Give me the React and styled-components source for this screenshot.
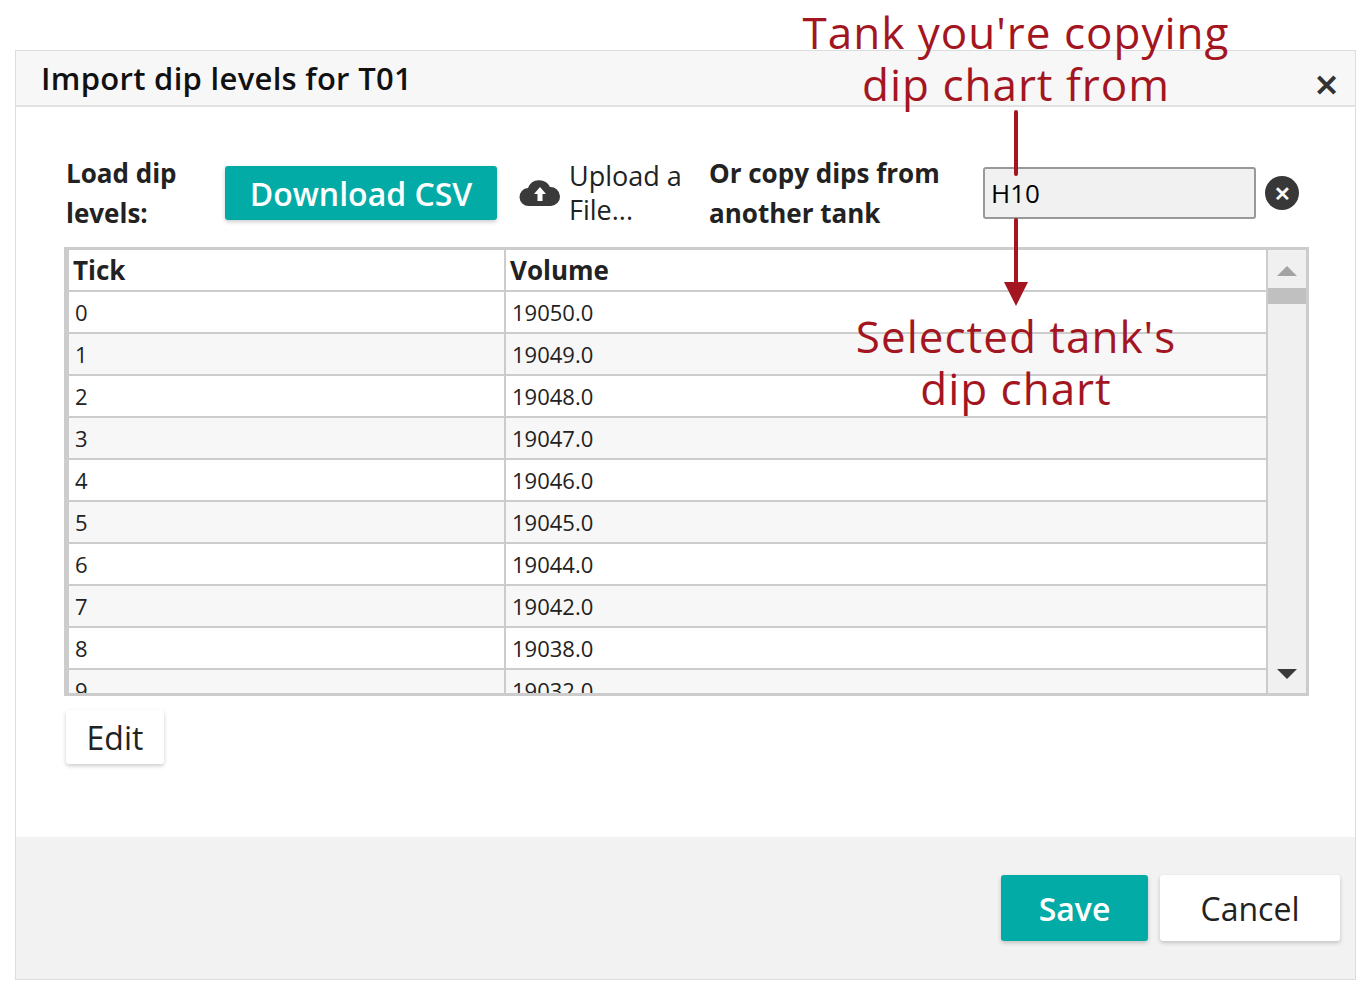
import styled, { createGlobalStyle } from "styled-components";

const Global = createGlobalStyle`
  body { margin: 0; background: #fff; font-family: "Open Sans", "Lato", sans-serif; }
`;

const rows = [
  ["0", "19050.0"], ["1", "19049.0"], ["2", "19048.0"], ["3", "19047.0"], ["4", "19046.0"],
  ["5", "19045.0"], ["6", "19044.0"], ["7", "19042.0"], ["8", "19038.0"], ["9", "19032.0"],
];

const App = () => (
  <Page>
    <Global />
    <Dialog>
      <Header>
        <Title>Import dip levels for T01</Title>
        <Close>✕</Close>
      </Header>
      <Body>
        <Toolbar>
          <Label width={159}>Load dip<br />levels:</Label>
          <Primary>Download CSV</Primary>
          <Upload>
            <svg width="42" height="30" viewBox="0 0 42 30">
              <path d="M10 28 A9 9 0 0 1 9 10 A12 12 0 0 1 31 9 A9.5 9.5 0 0 1 32 28 Z" fill="#3a3a3a" />
              <path d="M21 9 L27 16 H23.5 V23 H18.5 V16 H15 Z" fill="#fff" />
            </svg>
            <span>Upload a<br />File...</span>
          </Upload>
          <Label width={274}>Or copy dips from<br />another tank</Label>
          <Input>H10</Input>
          <Clear>✕</Clear>
        </Toolbar>
        <TableWrap>
          <Table>
            <HeadRow><Cell bold>Tick</Cell><Cell bold>Volume</Cell></HeadRow>
            {rows.map(([t, v], i) => (
              <Row key={t} alt={i % 2 === 1}><Cell>{t}</Cell><Cell>{v}</Cell></Row>
            ))}
          </Table>
          <Scroll>
            <Arrow up />
            <Thumb />
            <Spacer />
            <Arrow />
          </Scroll>
        </TableWrap>
        <Ghost>Edit</Ghost>
      </Body>
      <Footer>
        <SaveBtn>Save</SaveBtn>
        <CancelBtn>Cancel</CancelBtn>
      </Footer>
    </Dialog>
    <Note top={6}>Tank you're copying<br />dip chart from</Note>
    <Line top={110} height={66} />
    <Line top={218} height={72} />
    <Head />
    <Note top={310}>Selected tank's<br />dip chart</Note>
  </Page>
);

export default App;

const Page = styled.div`
  position: relative;
  width: 1372px;
  height: 999px;
  padding: 50px 0 0 15px;
  box-sizing: border-box;
`;

const Dialog = styled.div`
  width: 1341px;
  height: 930px;
  border: 1px solid #ddd;
  display: flex;
  flex-direction: column;
  box-sizing: border-box;
`;

const Header = styled.div`
  height: 56px;
  background: #f7f7f7;
  border-bottom: 2px solid #e2e2e2;
  display: flex;
  align-items: center;
  justify-content: space-between;
  padding: 0 16px 0 25px;
  box-sizing: border-box;
`;

const Title = styled.div`
  font-size: 31px;
  font-weight: 600;
  color: #111;
  letter-spacing: 0.3px;
`;

const Close = styled.div`
  font-size: 30px;
  color: #333;
  font-weight: bold;
  margin-top: 12px;
`;

const Body = styled.div`
  flex: 1;
  padding: 50px 48px 0 48px;
`;

const Toolbar = styled.div`
  display: flex;
  align-items: center;
  height: 72px;
  margin-left: 2px;
  margin-bottom: 18px;
`;

const Label = styled.div`
  width: ${(p) => p.width}px;
  flex-shrink: 0;
  font-size: 26px;
  font-weight: 700;
  line-height: 40px;
  color: #222;
`;

const Btn = styled.div`
  border-radius: 3px;
  box-shadow: 0 2px 4px rgba(0, 0, 0, 0.2);
  font-size: 32px;
  display: flex;
  align-items: center;
  justify-content: center;
`;

const Primary = styled(Btn)`
  background: #03aba6;
  color: #fff;
  width: 272px;
  height: 54px;
  font-weight: 600;
  flex-shrink: 0;
`;

const Upload = styled.div`
  width: 190px;
  flex-shrink: 0;
  display: flex;
  align-items: center;
  gap: 8px;
  font-size: 27px;
  line-height: 34px;
  color: #222;
  margin-left: 22px;
`;

const Input = styled.div`
  width: 273px;
  height: 52px;
  border: 2px solid #999;
  border-radius: 3px;
  background: #f1f1f1;
  font-size: 26px;
  display: flex;
  align-items: center;
  padding-left: 6px;
  box-sizing: border-box;
`;

const Clear = styled.div`
  width: 34px;
  height: 34px;
  border-radius: 50%;
  background: #383838;
  color: #fff;
  font-weight: bold;
  font-size: 20px;
  display: flex;
  align-items: center;
  justify-content: center;
  margin-left: 9px;
`;

const TableWrap = styled.div`
  width: 1245px;
  height: 449px;
  border: 3px solid #ccc;
  box-sizing: border-box;
  display: flex;
  overflow: hidden;
`;

const Table = styled.div`
  flex: 1;
  border-left: 2px solid #ccc;
`;

const Row = styled.div`
  display: grid;
  grid-template-columns: 435px 1fr;
  height: 42px;
  border-bottom: 2px solid #ccc;
  box-sizing: border-box;
  background: ${(p) => (p.alt ? "#f7f7f7" : "#fff")};
`;

const HeadRow = styled(Row)``;

const Cell = styled.div`
  display: flex;
  align-items: center;
  padding-left: ${(p) => (p.bold ? "4px" : "6px")};
  font-size: ${(p) => (p.bold ? "26px" : "22px")};
  font-weight: ${(p) => (p.bold ? 700 : 400)};
  color: #222;
  & + & { border-left: 2px solid #ccc; }
`;

const Scroll = styled.div`
  width: 40px;
  background: #f0f0f0;
  border-left: 2px solid #ccc;
  display: flex;
  flex-direction: column;
  align-items: center;
  padding: 16px 0 14px;
  box-sizing: border-box;
`;

const Arrow = styled.div`
  width: 0;
  height: 0;
  border-left: 10px solid transparent;
  border-right: 10px solid transparent;
  ${(p) => (p.up ? "border-bottom: 10px solid #a3a3a3;" : "border-top: 10px solid #3a3a3a;")}
`;

const Thumb = styled.div`
  width: 38px;
  height: 16px;
  background: #c0c0c0;
  margin-top: 12px;
`;

const Spacer = styled.div`
  flex: 1;
`;

const Ghost = styled(Btn)`
  background: #fff;
  width: 98px;
  height: 54px;
  margin: 14px 0 0 2px;
  color: #222;
`;

const Footer = styled.div`
  height: 142px;
  background: #f2f2f2;
  display: flex;
  justify-content: flex-end;
  align-items: center;
  gap: 12px;
  padding-right: 15px;
`;

const SaveBtn = styled(Primary)`
  width: 147px;
  height: 66px;
`;

const CancelBtn = styled(Ghost)`
  width: 180px;
  height: 66px;
  margin: 0;
`;

const Note = styled.div`
  position: absolute;
  top: ${(p) => p.top}px;
  left: 1016px;
  transform: translateX(-50%);
  text-align: center;
  white-space: nowrap;
  color: #a31621;
  font-size: 44px;
  line-height: 52px;
  letter-spacing: 1px;
`;

const Line = styled.div`
  position: absolute;
  left: 1014px;
  top: ${(p) => p.top}px;
  width: 4px;
  height: ${(p) => p.height}px;
  background: #a31621;
  border-radius: 2px;
`;

const Head = styled.div`
  position: absolute;
  left: 1004px;
  top: 282px;
  border-left: 12px solid transparent;
  border-right: 12px solid transparent;
  border-top: 24px solid #a31621;
`;
